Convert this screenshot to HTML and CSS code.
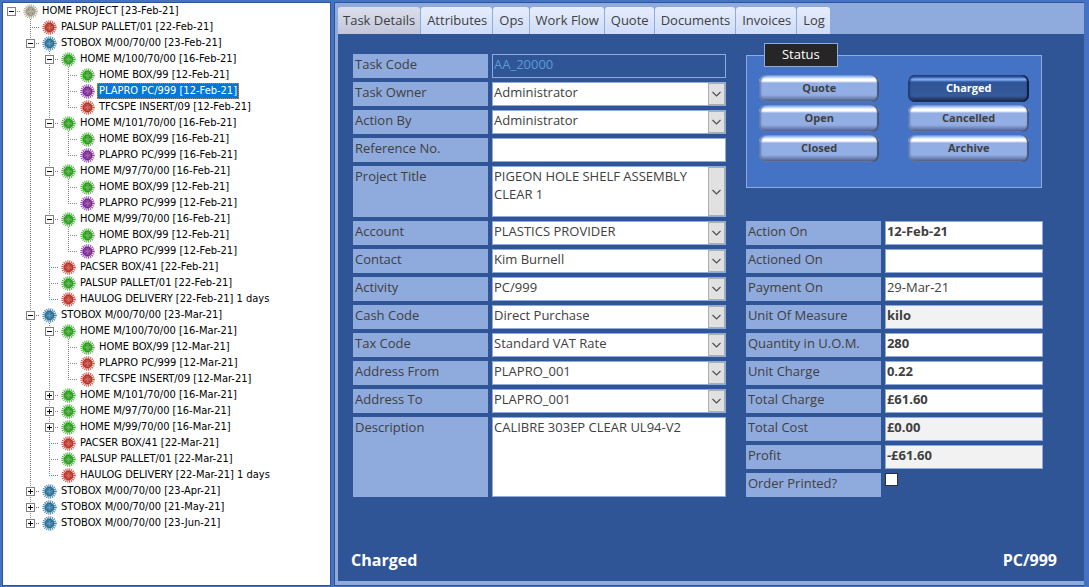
FILE: index.html
```html
<!DOCTYPE html>
<html lang="en">
<head>
<meta charset="utf-8">
<title>Task Details</title>
<link rel="stylesheet" href="styles.css">
</head>
<body>
<svg class="defs" aria-hidden="true">
  <symbol id="burst" viewBox="0 0 15 15">
    <circle cx="7.5" cy="7.5" r="5.9" fill="none" stroke="currentColor" stroke-width="2.6" stroke-dasharray=".95 .904" opacity=".85"/>
    <circle cx="7.500" cy="7.5" r="4.9" fill="currentColor"/>
    <circle cx="7.5" cy="7.5" r="3.6" class="glow"/>
    <circle cx="7.5" cy="7.5" r="1.8" class="glow"/>
    <path d="M5 5l1.500 1.500M10 5l-1.500 1.500M5 10l1.500-1.500M10 10l-1.500-1.500" stroke="#222" stroke-opacity=".4" stroke-width=".8"/>
  </symbol>
</svg>
<div class="app">
  <nav class="tree" aria-label="Project tasks">
    <ul class="root">
      <li><div class="row"><span class="slot"><button class="box" aria-label="Collapse"></button></span><svg class="icon sand"><use href="#burst"/></svg><span class="name">HOME PROJECT [23-Feb-21]</span></div>
        <ul>
          <li><div class="row"><span class="slot"></span><svg class="icon red"><use href="#burst"/></svg><span class="name">PALSUP PALLET/01 [22-Feb-21]</span></div></li>
          <li><div class="row"><span class="slot"><button class="box" aria-label="Collapse"></button></span><svg class="icon blue"><use href="#burst"/></svg><span class="name">STOBOX M/00/70/00 [23-Feb-21]</span></div>
            <ul>
              <li><div class="row"><span class="slot"><button class="box" aria-label="Collapse"></button></span><svg class="icon green"><use href="#burst"/></svg><span class="name">HOME M/100/70/00 [16-Feb-21]</span></div>
                <ul>
                  <li><div class="row"><span class="slot"></span><svg class="icon green"><use href="#burst"/></svg><span class="name">HOME BOX/99 [12-Feb-21]</span></div></li>
                  <li><div class="row"><span class="slot"></span><svg class="icon purple"><use href="#burst"/></svg><span class="name selected">PLAPRO PC/999 [12-Feb-21]</span></div></li>
                  <li><div class="row"><span class="slot"></span><svg class="icon red"><use href="#burst"/></svg><span class="name">TFCSPE INSERT/09 [12-Feb-21]</span></div></li>
                </ul>
              </li>
              <li><div class="row"><span class="slot"><button class="box" aria-label="Collapse"></button></span><svg class="icon green"><use href="#burst"/></svg><span class="name">HOME M/101/70/00 [16-Feb-21]</span></div>
                <ul>
                  <li><div class="row"><span class="slot"></span><svg class="icon green"><use href="#burst"/></svg><span class="name">HOME BOX/99 [16-Feb-21]</span></div></li>
                  <li><div class="row"><span class="slot"></span><svg class="icon purple"><use href="#burst"/></svg><span class="name">PLAPRO PC/999 [16-Feb-21]</span></div></li>
                </ul>
              </li>
              <li><div class="row"><span class="slot"><button class="box" aria-label="Collapse"></button></span><svg class="icon green"><use href="#burst"/></svg><span class="name">HOME M/97/70/00 [16-Feb-21]</span></div>
                <ul>
                  <li><div class="row"><span class="slot"></span><svg class="icon green"><use href="#burst"/></svg><span class="name">HOME BOX/99 [12-Feb-21]</span></div></li>
                  <li><div class="row"><span class="slot"></span><svg class="icon purple"><use href="#burst"/></svg><span class="name">PLAPRO PC/999 [12-Feb-21]</span></div></li>
                </ul>
              </li>
              <li><div class="row"><span class="slot"><button class="box" aria-label="Collapse"></button></span><svg class="icon green"><use href="#burst"/></svg><span class="name">HOME M/99/70/00 [16-Feb-21]</span></div>
                <ul>
                  <li><div class="row"><span class="slot"></span><svg class="icon green"><use href="#burst"/></svg><span class="name">HOME BOX/99 [12-Feb-21]</span></div></li>
                  <li><div class="row"><span class="slot"></span><svg class="icon purple"><use href="#burst"/></svg><span class="name">PLAPRO PC/999 [12-Feb-21]</span></div></li>
                </ul>
              </li>
              <li><div class="row"><span class="slot"></span><svg class="icon red"><use href="#burst"/></svg><span class="name">PACSER BOX/41 [22-Feb-21]</span></div></li>
              <li><div class="row"><span class="slot"></span><svg class="icon green"><use href="#burst"/></svg><span class="name">PALSUP PALLET/01 [22-Feb-21]</span></div></li>
              <li><div class="row"><span class="slot"></span><svg class="icon red"><use href="#burst"/></svg><span class="name">HAULOG DELIVERY [22-Feb-21] 1 days</span></div></li>
            </ul>
          </li>
          <li><div class="row"><span class="slot"><button class="box" aria-label="Collapse"></button></span><svg class="icon blue"><use href="#burst"/></svg><span class="name">STOBOX M/00/70/00 [23-Mar-21]</span></div>
            <ul>
              <li><div class="row"><span class="slot"><button class="box" aria-label="Collapse"></button></span><svg class="icon green"><use href="#burst"/></svg><span class="name">HOME M/100/70/00 [16-Mar-21]</span></div>
                <ul>
                  <li><div class="row"><span class="slot"></span><svg class="icon green"><use href="#burst"/></svg><span class="name">HOME BOX/99 [12-Mar-21]</span></div></li>
                  <li><div class="row"><span class="slot"></span><svg class="icon red"><use href="#burst"/></svg><span class="name">PLAPRO PC/999 [12-Mar-21]</span></div></li>
                  <li><div class="row"><span class="slot"></span><svg class="icon red"><use href="#burst"/></svg><span class="name">TFCSPE INSERT/09 [12-Mar-21]</span></div></li>
                </ul>
              </li>
              <li><div class="row"><span class="slot"><button class="box closed" aria-label="Expand"></button></span><svg class="icon green"><use href="#burst"/></svg><span class="name">HOME M/101/70/00 [16-Mar-21]</span></div></li>
              <li><div class="row"><span class="slot"><button class="box closed" aria-label="Expand"></button></span><svg class="icon green"><use href="#burst"/></svg><span class="name">HOME M/97/70/00 [16-Mar-21]</span></div></li>
              <li><div class="row"><span class="slot"><button class="box closed" aria-label="Expand"></button></span><svg class="icon green"><use href="#burst"/></svg><span class="name">HOME M/99/70/00 [16-Mar-21]</span></div></li>
              <li><div class="row"><span class="slot"></span><svg class="icon red"><use href="#burst"/></svg><span class="name">PACSER BOX/41 [22-Mar-21]</span></div></li>
              <li><div class="row"><span class="slot"></span><svg class="icon green"><use href="#burst"/></svg><span class="name">PALSUP PALLET/01 [22-Mar-21]</span></div></li>
              <li><div class="row"><span class="slot"></span><svg class="icon red"><use href="#burst"/></svg><span class="name">HAULOG DELIVERY [22-Mar-21] 1 days</span></div></li>
            </ul>
          </li>
          <li><div class="row"><span class="slot"><button class="box closed" aria-label="Expand"></button></span><svg class="icon blue"><use href="#burst"/></svg><span class="name">STOBOX M/00/70/00 [23-Apr-21]</span></div></li>
          <li><div class="row"><span class="slot"><button class="box closed" aria-label="Expand"></button></span><svg class="icon blue"><use href="#burst"/></svg><span class="name">STOBOX M/00/70/00 [21-May-21]</span></div></li>
          <li><div class="row"><span class="slot"><button class="box closed" aria-label="Expand"></button></span><svg class="icon blue"><use href="#burst"/></svg><span class="name">STOBOX M/00/70/00 [23-Jun-21]</span></div></li>
        </ul>
      </li>
    </ul>
  </nav>

  <main class="panel">
    <div class="tabs" role="tablist">
      <button class="tab active" role="tab" aria-selected="true">Task Details</button>
      <button class="tab" role="tab">Attributes</button>
      <button class="tab" role="tab">Ops</button>
      <button class="tab" role="tab">Work Flow</button>
      <button class="tab" role="tab">Quote</button>
      <button class="tab" role="tab">Documents</button>
      <button class="tab" role="tab">Invoices</button>
      <button class="tab" role="tab">Log</button>
    </div>
    <form class="page">
      <div class="columns">
        <div class="left fields">
          <label for="code">Task Code</label><input id="code" class="code" value="AA_20000" readonly>
          <label for="owner">Task Owner</label><select id="owner"><option>Administrator</option></select>
          <label for="by">Action By</label><select id="by"><option>Administrator</option></select>
          <label for="ref">Reference No.</label><input id="ref">
          <label for="title">Project Title</label>
          <div class="combo"><textarea id="title" rows="2">PIGEON HOLE SHELF ASSEMBLY CLEAR 1</textarea><button type="button" aria-label="Open list"></button></div>
          <label for="account">Account</label><select id="account"><option>PLASTICS PROVIDER</option></select>
          <label for="contact">Contact</label><select id="contact"><option>Kim Burnell</option></select>
          <label for="activity">Activity</label><select id="activity"><option>PC/999</option></select>
          <label for="cash">Cash Code</label><select id="cash"><option>Direct Purchase</option></select>
          <label for="tax">Tax Code</label><select id="tax"><option>Standard VAT Rate</option></select>
          <label for="from">Address From</label><select id="from"><option>PLAPRO_001</option></select>
          <label for="to">Address To</label><select id="to"><option>PLAPRO_001</option></select>
          <label for="desc">Description</label><textarea id="desc" class="desc">CALIBRE 303EP CLEAR UL94-V2</textarea>
        </div>
        <div class="right">
          <fieldset class="status">
            <legend>Status</legend>
            <div class="buttons">
              <button type="button" class="bevel">Quote</button>
              <button type="button" class="bevel on">Charged</button>
              <button type="button" class="bevel">Open</button>
              <button type="button" class="bevel">Cancelled</button>
              <button type="button" class="bevel">Closed</button>
              <button type="button" class="bevel">Archive</button>
            </div>
          </fieldset>
          <div class="fields">
            <label for="on">Action On</label><input id="on" class="bold" value="12-Feb-21">
            <label for="done">Actioned On</label><input id="done">
            <label for="pay">Payment On</label><input id="pay" value="29-Mar-21">
            <label for="uom">Unit Of Measure</label><input id="uom" class="bold locked" value="kilo" readonly>
            <label for="qty">Quantity in U.O.M.</label><input id="qty" class="bold" value="280">
            <label for="unit">Unit Charge</label><input id="unit" class="bold" value="0.22">
            <label for="total">Total Charge</label><input id="total" class="bold" value="£61.60">
            <label for="cost">Total Cost</label><input id="cost" class="bold locked" value="£0.00" readonly>
            <label for="profit">Profit</label><input id="profit" class="bold locked" value="-£61.60" readonly>
            <label for="printed">Order Printed?</label><input id="printed" class="check" type="checkbox">
          </div>
        </div>
      </div>
      <div class="summary"><span>Charged</span><span>PC/999</span></div>
    </form>
  </main>
</div>
</body>
</html>
```
FILE: styles.css
```css
* { box-sizing: border-box; }
body {
  margin: 0;
  background: #4472c4;
  font: 13px/18px "Open Sans", "Noto Sans", sans-serif;
  color: #404040;
}
button, input, select, textarea { font: inherit; color: inherit; margin: 0; border-radius: 0; }
.defs { display: none; }
.app { display: flex; gap: 3px; min-height: 100vh; padding: 2px 5px 1px 2px; }

/* Task tree */
.tree {
  flex: 0 0 329px;
  background: #fff;
  border: 1px solid #2f5597;
  color: #000;
  font: 11px/16px "DejaVu Sans Condensed", "DejaVu Sans", sans-serif;
}
.tree ul { list-style: none; margin: 0; padding: 0; }
.tree li ul { margin-left: 19px; }
.tree li {
  background: repeating-linear-gradient(#808080 0 1px, transparent 1px 2px) 8px 0 / 1px 100% no-repeat;
}
.tree li:last-child { background-size: 1px 9px; }
.tree .root > li { background: none; }
.row { display: flex; align-items: flex-end; height: 16px; white-space: nowrap; }
.slot {
  display: flex; align-items: center; justify-content: center;
  width: 17px; height: 16px;
  background: repeating-linear-gradient(90deg, #808080 0 1px, transparent 1px 2px) 8px 8px / 10px 1px no-repeat;
}
.box {
  width: 9px; height: 9px; padding: 0;
  border: 1px solid #808080;
  background: linear-gradient(#000, #000) center / 5px 1px no-repeat #fff;
}
.box.closed {
  background: linear-gradient(#000, #000) center / 5px 1px no-repeat, linear-gradient(#000, #000) center / 1px 5px no-repeat #fff;
}
.icon { width: 15px; height: 15px; margin: 0 2px 0 3px; }
.glow { fill: #fff; fill-opacity: .15; }
.sand { color: #a39b86; }
.red { color: #bf3225; }
.blue { color: #25709a; }
.green { color: #2aa11a; }
.purple { color: #7d2494; }
.name { padding: 0 2px; }
.selected { background: #0078d7; color: #fff; outline: 1px dotted #d08030; outline-offset: -1px; }

/* Task form */
.panel {
  flex: 1;
  display: flex; flex-direction: column;
  border: 1px solid #2f5597;
  border-width: 1px 0 1px 1px;
  background: #8faadc;
  padding: 4px 0 4px 3px;
}
.tabs { display: flex; gap: 1px; }
.tab {
  height: 27px; padding: 0 5px 1px 6px;
  border: 0; border-radius: 3px 3px 0 0;
  background: linear-gradient(#e6edfc, #cfdcf8);
  white-space: nowrap;
}
.tab.active { padding-left: 5px; background: linear-gradient(#dcdfea, #c1c6dc); }
.page {
  flex: 1;
  display: flex; flex-direction: column; justify-content: space-between;
  padding: 9px 27px 9px 13px;
  background: #2f5597;
}
.columns { display: flex; gap: 20px; padding-right: 14px; }
.left { flex: 374; padding: 11px 0 0 2px; }
.right { flex: 298; }
.fields { display: grid; grid-template-columns: 135px 1fr; gap: 4px; align-content: start; }
.fields label { min-height: 24px; padding: 1px 2px; background: #8faadc; }
.fields input, .fields select, .fields textarea {
  width: 100%; min-width: 0; height: 24px;
  padding: 0 0 4px 1px;
  border: 1px solid #8faadc;
  background-color: #fff;
  display: block;
}
.fields select, .fields textarea { padding-left: 1px; }
.fields select, .combo button {
  appearance: none;
  background-image:
    url("data:image/svg+xml,%3Csvg xmlns='http://www.w3.org/2000/svg' width='17' height='10'%3E%3Cpath d='M4.5 3l4 4 4-4' fill='none' stroke='%23505050' stroke-width='1.2'/%3E%3C/svg%3E"),
    linear-gradient(#e1e1e1, #e1e1e1),
    linear-gradient(#adadad, #adadad);
  background-repeat: no-repeat;
  background-position: right center, right 1px center, right center;
  background-size: 17px 10px, 15px calc(100% - 2px), 17px 100%;
}
.fields .code { background: #2f5597; color: #5b9bd5; }
.fields .bold { font-weight: 700; }
.fields .locked { background: #f2f2f2; }
.combo { display: flex; height: 51px; border: 1px solid #8faadc; background: #fff; }
.fields .combo textarea { flex: 1; height: auto; border: 0; }
.fields textarea { padding-top: 0; resize: none; overflow: hidden; }
.combo button { width: 17px; border: 0; padding: 0; }
.fields .desc { height: 80px; }
.fields .check { appearance: none; width: 13px; height: 13px; border-color: #303030; padding: 0; }

.status {
  margin: 0 1px 33px 0; padding: 8px 12px 25px;
  border: 1px solid #8faadc;
  background: #4472c4;
  min-width: 0;
}
.status legend {
  margin-left: 5px; padding: 0 0 0 17px;
  width: 74px; height: 24px;
  border: 1px solid #8faadc;
  background: #262626; color: #fff;
  line-height: 20px;
}
.buttons { display: grid; grid-template-columns: 1fr 1fr; gap: 3px 29px; }
.bevel {
  height: 27px; padding: 0 0 1px;
  border: 0; border-radius: 7px;
  background: linear-gradient(#7ea6ee 0, #a8c8ff 2px, #fff 4px, #fff 6px, #93aee4 8px, #93aee4 20px, #7288b8 23px, #4f6088 26px, #8091b5 27px);
  box-shadow: inset -2px 0 1px #44557c, inset 2px 0 2px #6279ad;
  font-size: 11px; font-weight: 700;
}
.bevel.on {
  color: #fff;
  background: linear-gradient(#24488a 0, #2f5597 2px, #7fa8f5 4px, #7fa8f5 5px, #2f5597 7px, #365a9c 21px, #1c3158 25px, #182a4c 27px);
  box-shadow: inset -2px 0 1px #0d1c3c, inset 2px 0 2px #203c74;
}
.summary {
  display: flex; justify-content: space-between;
  color: #fff; font-size: 16px; line-height: 24px; font-weight: 700;
}
```
